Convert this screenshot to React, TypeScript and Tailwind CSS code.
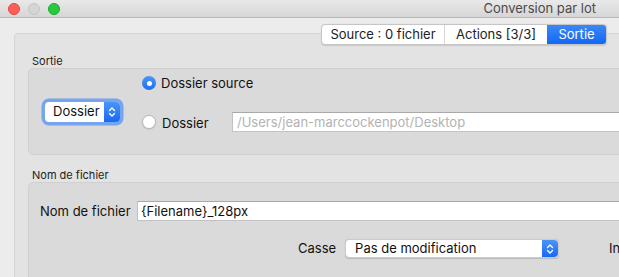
import React from 'react';

const font = "font-['Inter','Liberation_Sans',sans-serif]";

const Stepper: React.FC = () => (
    <div className="flex h-full w-[16px] items-center justify-center rounded-r-[4px] bg-gradient-to-b from-[#4a93f8] to-[#1669f2]">
        <svg width="10" height="14" viewBox="0 0 10 14" fill="none">
            <path d="M2.5 5.5 L5 3 L7.5 5.5" stroke="white" strokeWidth="1.4" strokeLinecap="round" strokeLinejoin="round" />
            <path d="M2.5 8.5 L5 11 L7.5 8.5" stroke="white" strokeWidth="1.4" strokeLinecap="round" strokeLinejoin="round" />
        </svg>
    </div>
);

const Radio: React.FC<{ checked?: boolean }> = ({ checked }) =>
    checked ? (
        <div className="flex h-[14px] w-[14px] shrink-0 items-center justify-center rounded-full bg-gradient-to-b from-[#4b94f8] to-[#1c6ff3]">
            <div className="h-[5px] w-[5px] rounded-full bg-white" />
        </div>
    ) : (
        <div className="h-[14px] w-[14px] shrink-0 rounded-full border border-[#b9b9b9] bg-white shadow-[0_0.5px_1px_rgba(0,0,0,0.15)]" />
    );

const App: React.FC = () => {
    const tabs = ['Source : 0 fichier', 'Actions [3/3]', 'Sortie'];
    const selectedTab = 'Sortie';

    return (
        <div className={`h-[277px] w-[619px] overflow-hidden bg-[#ececec] text-[13px] text-[#262626] ${font}`}>
            {/* title bar */}
            <div className="flex h-[18px] items-center border-b border-[#b8b8b8] bg-gradient-to-b from-[#e9e9e9] to-[#d6d6d6] pl-[8px]">
                <div className="flex gap-[8px]">
                    <div className="h-[12px] w-[12px] rounded-full border border-[#e2463f] bg-[#fe5f57]" />
                    <div className="h-[12px] w-[12px] rounded-full border border-[#c6c6c6] bg-[#d5d5d5]" />
                    <div className="h-[12px] w-[12px] rounded-full border border-[#1aab29] bg-[#28c840]" />
                </div>
                <div className="ml-auto pr-[23px] text-[13px] leading-none text-[#4a4a4a]">Conversion par lot</div>
            </div>

            {/* tabs */}
            <div className="relative z-10 mt-[6px] flex h-[21px] justify-end pr-[12px]">
                <div className="flex overflow-hidden rounded-[4px] border border-[#c6c6c6] bg-white shadow-[0_0.5px_1px_rgba(0,0,0,0.12)]">
                    {tabs.map((tab, i) => (
                        <div
                            key={tab}
                            className={
                                tab === selectedTab
                                    ? 'flex w-[59px] items-center justify-center bg-gradient-to-b from-[#3b87f7] to-[#0f68f3] leading-none text-white'
                                    : `flex items-center justify-center leading-none text-[#222] ${i === 0 ? 'w-[123px] border-r border-[#d6d6d6]' : 'w-[102px]'}`
                            }
                        >
                            {tab}
                        </div>
                    ))}
                </div>
            </div>

            {/* tab panel */}
            <div className="-mt-[12px] ml-[14px] h-[260px] w-[640px] rounded-[4px] border border-[#d4d4d4] bg-[#e3e3e3]">
                <div className="ml-[17px] mt-[20px] h-[14px] text-[11px] leading-[14px] text-[#222]">Sortie</div>
                <div className="ml-[13px] flex h-[87px] items-center rounded-[5px] border border-[#d0d0d0] bg-[#dadada]">
                    <div className="ml-[16px] flex h-[20px] w-[75px] items-center rounded-[4px] bg-white shadow-[0_0_0_3.5px_rgba(84,146,245,0.75)]">
                        <span className="flex-1 pl-[8px] leading-none text-[#111]">Dossier</span>
                        <Stepper />
                    </div>
                    <div className="ml-[22px] flex self-start flex-col pt-[4px]">
                        <div className="flex h-[20px] items-center gap-[5px]">
                            <Radio checked />
                            <span className="leading-none text-[#111]">Dossier source</span>
                        </div>
                        <div className="mt-[19px] flex h-[20px] items-center">
                            <Radio />
                            <span className="ml-[6px] w-[70px] pt-[3px] leading-none text-[#111]">Dossier</span>
                            <div className="flex h-[20px] w-[400px] items-center border border-[#c2c2c2] border-t-[#a9a9a9] bg-white pl-[4px] leading-none text-[#b3b3b3]">
                                /Users/jean-marccockenpot/Desktop
                            </div>
                        </div>
                    </div>
                </div>

                <div className="ml-[17px] mt-[13px] h-[14px] text-[11px] leading-[14px] text-[#222]">Nom de fichier</div>
                <div className="ml-[13px] h-[120px] rounded-[5px] border border-[#d0d0d0] bg-[#dadada] pt-[18px]">
                    <div className="flex h-[20px] items-center">
                        <span className="ml-[11px] w-[97px] leading-none text-[#111]">Nom de fichier</span>
                        <div className="flex h-[20px] flex-1 items-center border border-[#c2c2c2] border-t-[#a9a9a9] bg-white pl-[3px] leading-none text-[#111]">
                            {'{Filename}_128px'}
                        </div>
                    </div>
                    <div className="mt-[18px] flex h-[19px] items-center">
                        <span className="ml-[269px] leading-none text-[#111]">Casse</span>
                        <div className="ml-[9px] flex h-[19px] w-[214px] items-center rounded-[4px] border border-[#cbcbcb] bg-white shadow-[0_0.5px_1px_rgba(0,0,0,0.15)]">
                            <span className="flex-1 pl-[9px] leading-none text-[#111]">Pas de modification</span>
                            <Stepper />
                        </div>
                        <span className="ml-[50px] leading-none text-[#111]">Index</span>
                    </div>
                </div>
            </div>
        </div>
    );
};

export default App;
